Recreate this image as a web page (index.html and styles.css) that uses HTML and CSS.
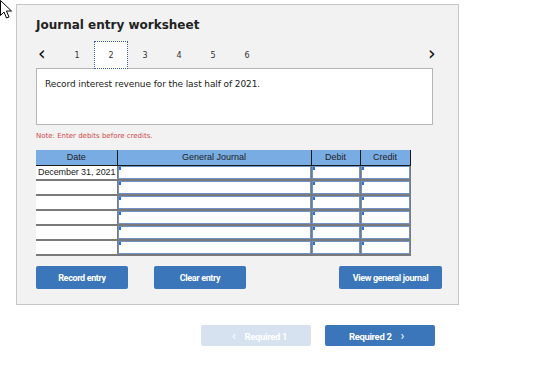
FILE: index.html
```html
<!DOCTYPE html>
<html lang="en">
<head>
    <meta charset="UTF-8">
    <title>Journal entry worksheet</title>
    <link rel="stylesheet" href="styles.css">
</head>
<body>
    <!-- mouse pointer in the capture -->
    <svg class="pointer" width="14" height="20" viewBox="0 0 14 20">
        <path d="M0.5 0.5 L0.5 15.5 L4 12 L6.5 18 L9 17 L6.5 11 L11.5 11 Z" fill="#fff" stroke="#000" stroke-width="1"/>
    </svg>

    <div class="worksheet">
        <h2 class="title">Journal entry worksheet</h2>

        <div class="tabs">
            <span class="arrow">&lsaquo;</span>
            <span class="tab">1</span>
            <span class="tab active">2</span>
            <span class="tab">3</span>
            <span class="tab">4</span>
            <span class="tab">5</span>
            <span class="tab">6</span>
            <span class="arrow next">&rsaquo;</span>
        </div>

        <div class="task">Record interest revenue for the last half of 2021.</div>

        <p class="note">Note: Enter debits before credits.</p>

        <table class="journal">
            <thead>
                <tr>
                    <th class="col-date">Date</th>
                    <th class="col-gj">General Journal</th>
                    <th class="col-dr">Debit</th>
                    <th class="col-cr">Credit</th>
                </tr>
            </thead>
            <tbody>
                <tr>
                    <td class="date">December 31, 2021</td>
                    <td><div class="cell"></div></td>
                    <td><div class="cell"></div></td>
                    <td><div class="cell"></div></td>
                </tr>
                <tr>
                    <td class="date"></td>
                    <td><div class="cell"></div></td>
                    <td><div class="cell"></div></td>
                    <td><div class="cell"></div></td>
                </tr>
                <tr>
                    <td class="date"></td>
                    <td><div class="cell"></div></td>
                    <td><div class="cell"></div></td>
                    <td><div class="cell"></div></td>
                </tr>
                <tr>
                    <td class="date"></td>
                    <td><div class="cell"></div></td>
                    <td><div class="cell"></div></td>
                    <td><div class="cell"></div></td>
                </tr>
                <tr>
                    <td class="date"></td>
                    <td><div class="cell"></div></td>
                    <td><div class="cell"></div></td>
                    <td><div class="cell"></div></td>
                </tr>
                <tr>
                    <td class="date"></td>
                    <td><div class="cell"></div></td>
                    <td><div class="cell"></div></td>
                    <td><div class="cell"></div></td>
                </tr>
            </tbody>
        </table>

        <div class="actions">
            <button class="btn btn-record">Record entry</button>
            <button class="btn btn-clear">Clear entry</button>
            <button class="btn btn-view">View general journal</button>
        </div>
    </div>

    <div class="pager">
        <button class="btn nav disabled"><span class="chev">&lsaquo;</span> Required 1</button>
        <button class="btn nav">Required 2 <span class="chev">&rsaquo;</span></button>
    </div>
</body>
</html>
```

FILE: styles.css
```css
/* Reset */
* {
    margin: 0;
    padding: 0;
    box-sizing: border-box;
}

body {
    font-family: 'DejaVu Sans', Verdana, sans-serif;
    background-color: #fff;
    color: #222;
    width: 558px;
    height: 367px;
    overflow: hidden;
}

.pointer {
    position: absolute;
    top: 0;
    left: 0;
    z-index: 10;
}

/* Worksheet panel */
.worksheet {
    margin: 4px 0 0 16px;
    width: 443px;
    height: 301px;
    padding: 12px 17px 0 19px;
    background-color: #f2f2f2;
    border: 1px solid #c6c6c6;
}

.title {
    font-size: 12px;
    font-weight: bold;
    line-height: 16px;
    color: #222;
}

/* Step tabs */
.tabs {
    display: flex;
    align-items: center;
    height: 28px;
    margin-top: 8px;
    font-size: 8px;
    color: #333;
}

.tabs .arrow {
    width: 24px;
    padding-left: 2px;
    padding-bottom: 5px;
    font-size: 19px;
    line-height: 16px;
    color: #111;
}

.tabs .arrow.next {
    margin-left: auto;
    width: 10px;
    padding-left: 0;
    margin-right: 3px;
}

.tab {
    width: 34px;
    height: 28px;
    display: flex;
    align-items: center;
    justify-content: center;
}

.tab.active {
    background-color: #fff;
    border: 1px dotted #3a5fa0;
    position: relative;
    z-index: 1;
}

/* Task text */
.task {
    width: 397px;
    height: 57px;
    margin-top: -1px;
    padding: 10px 8px;
    background-color: #fff;
    border: 1px solid #b5b5b5;
    font-size: 9px;
    letter-spacing: -0.1px;
    color: #222;
}

.note {
    margin-top: 6px;
    font-size: 7px;
    color: #d04848;
    line-height: 10px;
}

/* Journal table */
.journal {
    margin-top: 9px;
    border-collapse: collapse;
    width: 374px;
    font-family: 'Liberation Sans', Arial, sans-serif;
    font-size: 9px;
    table-layout: fixed;
}

.journal th {
    height: 15px;
    background-color: #78ace3;
    font-weight: normal;
    color: #222;
    border-bottom: 1px solid #1a1a1a;
    border-right: 1px solid #1a1a1a;
    padding: 0;
    text-align: center;
    line-height: 14px;
}

.journal .col-date { width: 81px; }
.journal .col-gj { width: 194px; }
.journal .col-dr { width: 49px; }
.journal .col-cr { width: 50px; }

.journal td {
    height: 15px;
    padding: 0;
    background-color: #fff;
    border-bottom: 2px solid #7a7a7a;
    border-right: 1px solid #7a7a7a;
    line-height: 12px;
}

.journal td.date {
    padding-left: 2px;
    color: #222;
    white-space: nowrap;
    letter-spacing: -0.1px;
}

.cell {
    position: relative;
    height: 13px;
    border: 1px solid #6f93c6;
    background-color: #fff;
}

.cell::before {
    content: "";
    position: absolute;
    top: 0;
    left: 0;
    width: 2px;
    height: 3px;
    background-color: #2d6fd2;
}

/* Buttons */
.actions {
    display: flex;
    margin-top: 10px;
}

.btn {
    height: 23px;
    border: none;
    border-radius: 2px;
    background-color: #3a76b9;
    color: #fff;
    font-family: Roboto, 'Liberation Sans', sans-serif;
    font-size: 9px;
    font-weight: bold;
    letter-spacing: -0.35px;
}

.btn-record { width: 92px; }
.btn-clear { width: 92px; margin-left: 26px; }
.btn-view { width: 103px; margin-left: auto; margin-right: -1px; }

/* Bottom pager */
.pager {
    display: flex;
    gap: 14px;
    margin: 20px 0 0 201px;
}

.btn.nav {
    width: 110px;
    height: 21px;
    font-size: 9.5px;
}

.btn.nav.disabled {
    background-color: #d6e2f0;
}

.chev {
    font-size: 13px;
    font-weight: normal;
    margin: 0 7px;
}
```
